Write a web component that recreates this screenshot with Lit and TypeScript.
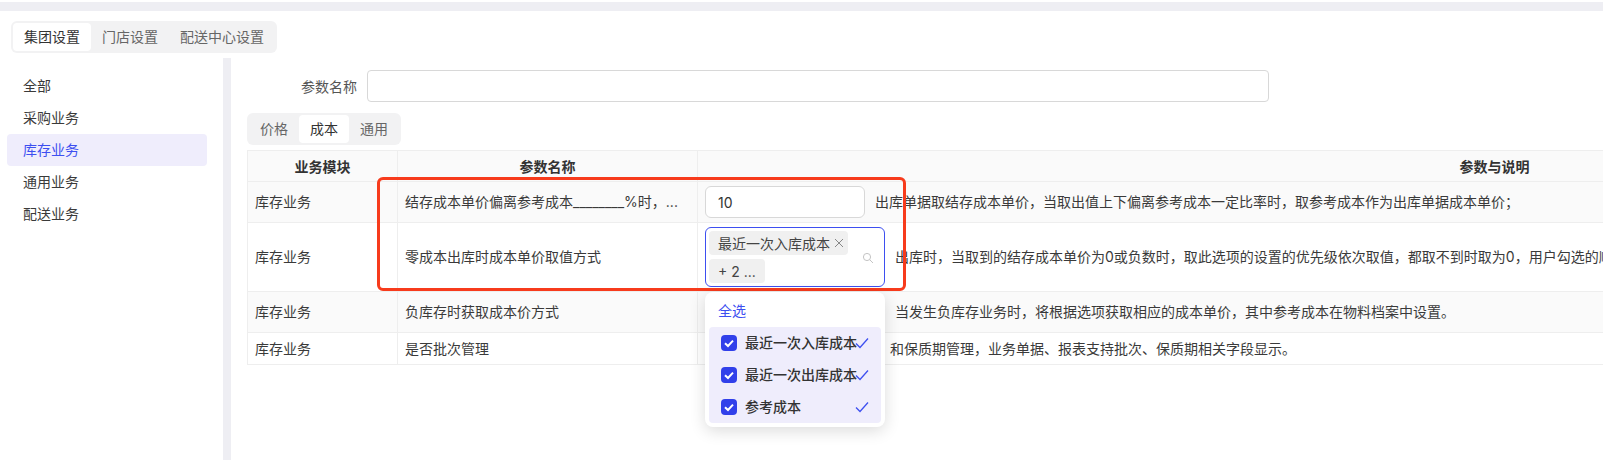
import { LitElement, html, css } from "lit";
import { customElement } from "lit/decorators.js";

const checkSvg = html`<svg class="tick" viewBox="0 0 14 12" width="14" height="12"><path d="M1 6.5 L5 10.5 L13 1.5" fill="none" stroke="#3d4ff0" stroke-width="1.3"/></svg>`;
const boxSvg = html`<span class="box"><svg viewBox="0 0 16 16" width="16" height="16"><path d="M4 8.2 L7 11 L12 5.6" fill="none" stroke="#fff" stroke-width="2"/></svg></span>`;

@customElement("app-root")
export class AppRoot extends LitElement {
  static styles = css`
    :host {
      display: block;
      width: 1603px;
      height: 460px;
      overflow: hidden;
      position: relative;
      background: #fff;
      font-family: "Inter", "Noto Sans CJK SC", sans-serif;
      font-size: 14px;
      color: #3a3a3a;
    }
    .band { height: 9px; margin-top: 2px; background: #eeeef3; }
    .top { padding: 10px 0 5px 11px; }
    .seg {
      display: inline-flex;
      background: #f2f2f3;
      border-radius: 6px;
      padding: 2px;
      height: 32px;
      box-sizing: border-box;
      align-items: stretch;
      vertical-align: top;
    }
    .seg span { display: flex; align-items: center; padding: 0 11px; color: #666; line-height: 1; }
    .seg .on { background: #fff; border-radius: 4px; color: #333; }
    .main { display: flex; height: 402px; }
    .side { width: 200px; padding: 12px 16px 0 7px; flex: none; }
    .side div { height: 32px; box-sizing: border-box; padding-bottom: 2px; display: flex; align-items: center; padding-left: 16px; border-radius: 4px; color: #3a3a3a; }
    .side .on { background: #efedfc; color: #3d4ff0; }
    .divider { width: 8px; background: #eeeef3; flex: none; }
    .content { flex: 1; min-width: 0; padding: 12px 0 0 16px; overflow: hidden; }
    .search { display: flex; align-items: center; height: 32px; margin-bottom: 11px; padding-left: 54px; }
    .search label { margin-right: 10px; color: #555; }
    .search .inp { width: 902px; height: 32px; box-sizing: border-box; border: 1px solid #d8d8d8; border-radius: 4px; }
    .table-wrap { margin-top: 5px; }
    table { border-collapse: collapse; table-layout: fixed; width: 2044px; }
    col.a { width: 150px; }
    col.b { width: 300px; }
    col.c { width: 1594px; }
    th, td { box-sizing: border-box; border: 1px solid #eeeeee; padding: 0 7px; text-align: left; white-space: nowrap; overflow: hidden; }
    td.t { padding-bottom: 2px; }
    th { height: 31px; background: #fafafa; text-align: center; font-weight: 600; color: #333; }
    .r1 td { height: 41px; background: #fafafa; }
    .r2 td { height: 69px; }
    .r3 td { height: 41px; background: #fafafa; }
    .r4 td { height: 32px; }
    .ctl { display: flex; align-items: center; }
    .desc { margin-left: 10px; margin-bottom: 2px; }
    .num { width: 160px; height: 32px; box-sizing: border-box; border: 1px solid #d8d8d8; border-radius: 6px; background: #fff; display: flex; align-items: center; padding-left: 12px; color: #333; }
    .select { width: 180px; height: 60px; box-sizing: border-box; border: 1px solid #3d4ff0; border-radius: 6px; background: #fff; padding: 3px; display: flex; flex-direction: column; gap: 4px; position: relative; }
    .tag { align-self: flex-start; height: 24px; border-radius: 4px; background: #f0f0f0; display: flex; align-items: center; padding: 0 4px 0 9px; gap: 4px; color: #444; }
    .tag.more { padding: 0 9px; }
    .search-ic { position: absolute; right: 10px; top: 24px; }
    .gap3 { width: 180px; height: 20px; flex: none; }
    .gap4 { width: 175px; height: 20px; flex: none; }
    .redbox { position: absolute; left: 377px; top: 177px; width: 529px; height: 114px; box-sizing: border-box; border: 3px solid #f73b1c; border-radius: 6px; pointer-events: none; }
    .drop { position: absolute; left: 705px; top: 292px; width: 180px; height: 135px; box-sizing: border-box; background: #fff; border-radius: 8px; box-shadow: 0 4px 16px rgba(0,0,0,.14); padding: 4px; }
    .all { height: 31px; box-sizing: border-box; padding-bottom: 4px; display: flex; align-items: center; padding-left: 9px; color: #3d4ff0; }
    .list { background: #efedfc; border-radius: 4px; }
    .opt { height: 32px; box-sizing: border-box; padding-bottom: 2px; display: flex; align-items: center; padding-left: 12px; color: #333; font-weight: 500; position: relative; }
    .box { width: 16px; height: 16px; border-radius: 4px; background: #3140ea; margin: 2px 8px 0 0; display: block; flex: none; }
    .box svg { display: block; }
    .tick { position: absolute; left: 146px; top: 10px; }
  `;

  render() {
    return html`
      <div class="band"></div>
      <div class="top">
        <div class="seg"><span class="on">集团设置</span><span>门店设置</span><span>配送中心设置</span></div>
      </div>
      <div class="main">
        <div class="side">
          <div>全部</div><div>采购业务</div><div class="on">库存业务</div><div>通用业务</div><div>配送业务</div>
        </div>
        <div class="divider"></div>
        <div class="content">
          <div class="search"><label>参数名称</label><div class="inp"></div></div>
          <div class="seg"><span>价格</span><span class="on">成本</span><span>通用</span></div>
          <div class="table-wrap">
            <table>
              <colgroup><col class="a" /><col class="b" /><col class="c" /></colgroup>
              <tr><th>业务模块</th><th>参数名称</th><th>参数与说明</th></tr>
              <tr class="r1"><td class="t">库存业务</td><td class="t">结存成本单价偏离参考成本________%时，...</td>
                <td><div class="ctl"><div class="num">10</div><span class="desc">出库单据取结存成本单价，当取出值上下偏离参考成本一定比率时，取参考成本作为出库单据成本单价；</span></div></td></tr>
              <tr class="r2"><td class="t">库存业务</td><td class="t">零成本出库时成本单价取值方式</td>
                <td><div class="ctl">
                  <div class="select">
                    <div class="tag">最近一次入库成本<svg viewBox="0 0 10 10" width="10" height="10"><path d="M1 1 L9 9 M9 1 L1 9" stroke="#888" stroke-width="1"/></svg></div>
                    <div class="tag more">+ 2 ...</div>
                    <svg class="search-ic" viewBox="0 0 12 12" width="12" height="12"><circle cx="5" cy="5" r="3.6" fill="none" stroke="#c4c4c4" stroke-width="1"/><path d="M7.8 7.8 L11 11" stroke="#c4c4c4" stroke-width="1"/></svg>
                  </div>
                  <span class="desc">出库时，当取到的结存成本单价为0或负数时，取此选项的设置的优先级依次取值，都取不到时取为0，用户勾选的顺序决定优先级。</span>
                </div></td></tr>
              <tr class="r3"><td class="t">库存业务</td><td class="t">负库存时获取成本价方式</td>
                <td><div class="ctl"><div class="gap3"></div><span class="desc">当发生负库存业务时，将根据选项获取相应的成本单价，其中参考成本在物料档案中设置。</span></div></td></tr>
              <tr class="r4"><td class="t">库存业务</td><td class="t">是否批次管理</td>
                <td><div class="ctl"><div class="gap4"></div><span class="desc">和保质期管理，业务单据、报表支持批次、保质期相关字段显示。</span></div></td></tr>
            </table>
          </div>
        </div>
      </div>
      <div class="redbox"></div>
      <div class="drop">
        <div class="all">全选</div>
        <div class="list">
          <div class="opt">${boxSvg}最近一次入库成本${checkSvg}</div>
          <div class="opt">${boxSvg}最近一次出库成本${checkSvg}</div>
          <div class="opt">${boxSvg}参考成本${checkSvg}</div>
        </div>
      </div>
    `;
  }
}
